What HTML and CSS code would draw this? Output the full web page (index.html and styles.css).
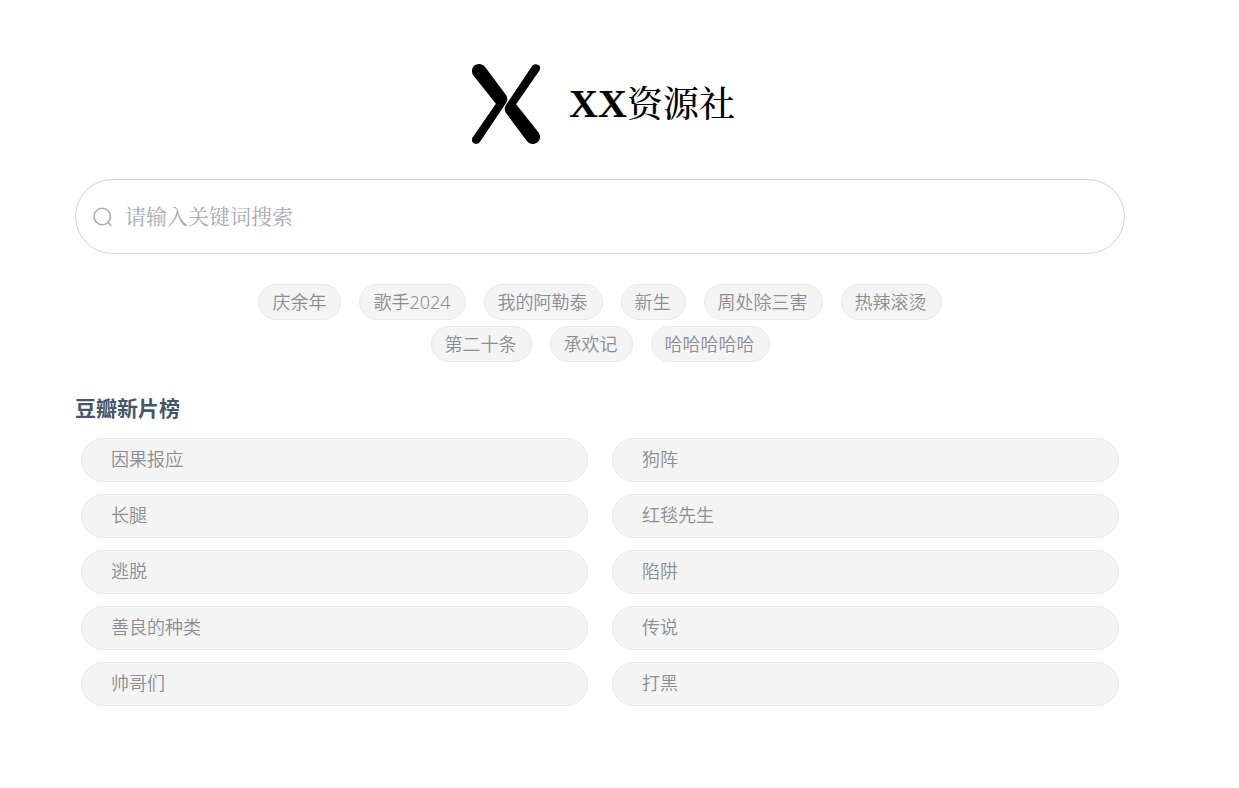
FILE: index.html
```html
<!DOCTYPE html>
<html lang="zh-CN">
<head>
<meta charset="utf-8">
<meta name="viewport" content="width=device-width, initial-scale=1">
<title>XX资源社</title>
<link rel="stylesheet" href="styles.css">
</head>
<body>
<main class="page">
  <header class="brand">
    <svg class="brand-logo" viewBox="0 0 68 80" aria-hidden="true">
      <path d="M1.200 11.200C-2 6 1.500 .1 6.800 .1C9.900 .1 12 1.400 13.500 3.500L34.200 31.300C35.700 33.600 35.700 36.300 34.200 38.700L7.900 78C5.200 82-2.400 79 .4 73.800L23.900 39.800Z"/>
      <path d="M66.800 68.800C70 74 66.500 79.900 61.200 79.900C58.100 79.900 56 78.600 54.500 76.500L33.800 48.700C32.300 46.400 32.300 43.700 33.800 41.300L60.100 2C62.800-2 70.400 1 67.600 6.200L44.100 40.200Z"/>
    </svg>
    <h1 class="brand-name"><span class="brand-latin">XX</span>资源社</h1>
  </header>

  <form class="search" role="search">
    <label class="search-label" for="keyword">
      <svg class="search-icon" viewBox="0 0 20 20" role="img" aria-label="搜索">
        <circle cx="9.200" cy="9.500" r="8.200"/>
        <path d="M15 15.500l3.200 3.200"/>
      </svg>
    </label>
    <input class="search-input" id="keyword" type="search" placeholder="请输入关键词搜索">
  </form>

  <nav class="tags" aria-label="热门搜索">
    <a class="tag" href="#">庆余年</a>
    <a class="tag" href="#">歌手2024</a>
    <a class="tag" href="#">我的阿勒泰</a>
    <a class="tag" href="#">新生</a>
    <a class="tag" href="#">周处除三害</a>
    <a class="tag" href="#">热辣滚烫</a>
    <a class="tag" href="#">第二十条</a>
    <a class="tag" href="#">承欢记</a>
    <a class="tag" href="#">哈哈哈哈哈</a>
  </nav>

  <section class="ranking">
    <h2 class="ranking-title">豆瓣新片榜</h2>
    <div class="ranking-list">
      <a class="film" href="#">因果报应</a>
      <a class="film" href="#">狗阵</a>
      <a class="film" href="#">长腿</a>
      <a class="film" href="#">红毯先生</a>
      <a class="film" href="#">逃脱</a>
      <a class="film" href="#">陷阱</a>
      <a class="film" href="#">善良的种类</a>
      <a class="film" href="#">传说</a>
      <a class="film" href="#">帅哥们</a>
      <a class="film" href="#">打黑</a>
    </div>
  </section>
</main>
</body>
</html>
```
FILE: styles.css
```css
* {
  box-sizing: border-box;
}

body {
  margin: 0;
  padding: 64px 39px 64px 0;
  background: #fff;
  color: #909399;
  font-family: "Noto Sans", "Noto Sans CJK SC", sans-serif;
  font-size: 18px;
}

.page {
  width: 87.5%;
  max-width: 1200px;
  margin: 0 auto;
}

.brand {
  display: flex;
  align-items: center;
  justify-content: center;
  gap: 29px;
  margin-bottom: 35px;
  padding-left: 7px;
}

.brand-logo {
  width: 68px;
  height: 80px;
  fill: #000;
}

.brand-name {
  margin: 0;
  color: #000;
  font-family: "Liberation Serif", "Noto Serif CJK SC", "Noto Sans CJK SC", serif;
  font-size: 36px;
  font-weight: 500;
  line-height: 40px;
}

.brand-latin {
  font-size: 40px;
  font-weight: 700;
}

.search {
  display: flex;
  align-items: center;
  height: 75px;
  padding: 0 17px;
  border: 1px solid #cbd5e1;
  border-radius: 38px;
}

.search-label {
  display: flex;
}

.search-icon {
  width: 20px;
  height: 20px;
  fill: none;
  stroke: #a8abb2;
  stroke-width: 1.6;
}

.search-input {
  flex: 1;
  min-width: 0;
  height: 100%;
  margin: 0;
  padding: 2px 12px 0;
  border: 0;
  outline: 0;
  background: transparent;
  color: #606266;
  font-family: "Liberation Serif", "Noto Serif CJK SC", "Noto Sans CJK SC", serif;
  font-size: 21px;
  appearance: none;
}

.search-input::placeholder {
  color: #a8abb2;
}

.tags {
  display: flex;
  flex-wrap: wrap;
  justify-content: center;
  gap: 6px 18px;
  width: 70%;
  margin: 30px auto 0;
}

.tag,
.film {
  border: 1px solid #e9e9eb;
  background: #f4f4f4;
  color: #8a8d93;
  font-weight: 350;
  text-decoration: none;
}

.tag {
  padding: 0 14px 0 13px;
  border-radius: 18px;
  line-height: 34px;
}

.ranking {
  margin-top: 30px;
}

.ranking-title {
  margin: 0;
  color: #475569;
  font-size: 21px;
  font-weight: 700;
  line-height: 32px;
}

.ranking-list {
  display: grid;
  grid-template-columns: 1fr 1fr;
  gap: 12px 24px;
  padding: 14px 6px 0;
}

.film {
  padding: 0 29px 2px;
  border-radius: 22px;
  line-height: 40px;
}
```
